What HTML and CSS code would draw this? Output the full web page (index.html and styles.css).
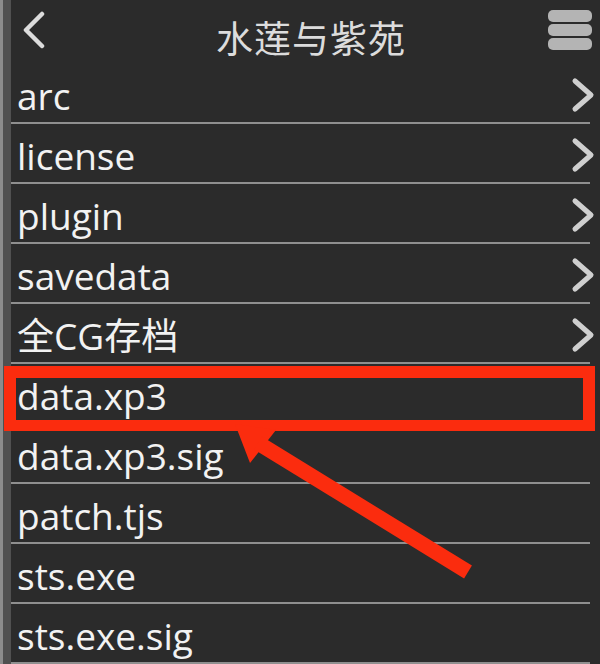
FILE: index.html
```html
<!DOCTYPE html>
<html>
<head>
    <title>水莲与紫苑</title>
    <link rel="stylesheet" href="styles.css">
</head>
<body>
    <div class="screen">
        <div class="edge"></div>

        <div class="panel">
            <header class="topbar">
                <svg class="back" width="24" height="38" viewBox="0 0 24 38">
                    <path d="M20 3 L4 19 L20 35" fill="none" stroke="#dcdcdc" stroke-width="4.5" stroke-linecap="round" stroke-linejoin="round"/>
                </svg>
                <h1 class="title">水莲与紫苑</h1>
                <div class="menu">
                    <span></span>
                    <span></span>
                    <span></span>
                </div>
            </header>

            <ul class="files">
                <li class="dir"><span>arc</span><svg class="chev" width="24" height="36" viewBox="0 0 24 36"><path d="M4 4 L20 18 L4 32" fill="none" stroke="#cfcfcf" stroke-width="5" stroke-linecap="round" stroke-linejoin="round"/></svg></li>
                <li class="dir"><span>license</span><svg class="chev" width="24" height="36" viewBox="0 0 24 36"><path d="M4 4 L20 18 L4 32" fill="none" stroke="#cfcfcf" stroke-width="5" stroke-linecap="round" stroke-linejoin="round"/></svg></li>
                <li class="dir"><span>plugin</span><svg class="chev" width="24" height="36" viewBox="0 0 24 36"><path d="M4 4 L20 18 L4 32" fill="none" stroke="#cfcfcf" stroke-width="5" stroke-linecap="round" stroke-linejoin="round"/></svg></li>
                <li class="dir"><span>savedata</span><svg class="chev" width="24" height="36" viewBox="0 0 24 36"><path d="M4 4 L20 18 L4 32" fill="none" stroke="#cfcfcf" stroke-width="5" stroke-linecap="round" stroke-linejoin="round"/></svg></li>
                <li class="dir"><span>全CG存档</span><svg class="chev" width="24" height="36" viewBox="0 0 24 36"><path d="M4 4 L20 18 L4 32" fill="none" stroke="#cfcfcf" stroke-width="5" stroke-linecap="round" stroke-linejoin="round"/></svg></li>
                <li><span>data.xp3</span></li>
                <li><span>data.xp3.sig</span></li>
                <li><span>patch.tjs</span></li>
                <li><span>sts.exe</span></li>
                <li><span>sts.exe.sig</span></li>
            </ul>
        </div>

        <!-- red highlight drawn over the screenshot -->
        <div class="mark"></div>
        <svg class="arrow" width="600" height="664" viewBox="0 0 600 664">
            <polygon points="235,424 276,430 250,463" fill="#fb2c0e"/>
            <line x1="258" y1="443" x2="468" y2="572" stroke="#fb2c0e" stroke-width="15"/>
        </svg>
    </div>
</body>
</html>
```

FILE: styles.css
```css
body {
    margin: 0;
    padding: 0;
    background-color: #2b2b2b;
}

.screen {
    position: relative;
    width: 600px;
    height: 664px;
    overflow: hidden;
    display: flex;
    background-color: #2b2b2b;
}

.edge {
    width: 11px;
    flex-shrink: 0;
    background: linear-gradient(to right, #8c8c8c 3px, #505050 3px);
}

.panel {
    flex: 1;
    display: flex;
    flex-direction: column;
}

.topbar {
    height: 65px;
    display: grid;
    grid-template-columns: 1fr auto 1fr;
    align-items: center;
    padding: 0 8px 0 11px;
}

.topbar .back {
    margin-bottom: 5px;
}

.title {
    margin: 11px 0 0 8px;
    font-family: "Noto Sans CJK SC", sans-serif;
    font-weight: normal;
    font-size: 37px;
    line-height: 1;
    letter-spacing: 1px;
    color: #dcdcdc;
}

.menu {
    justify-self: end;
    width: 44px;
    display: flex;
    flex-direction: column;
    gap: 2px;
    margin-bottom: 5px;
}

.menu span {
    height: 12px;
    border-radius: 5px;
    background-color: #b4b4b4;
}

.files {
    list-style-type: none;
    margin: 0;
    padding: 0;
}

.files li {
    height: 60px;
    box-sizing: border-box;
    padding: 6px 5px 2px 6px;
    display: flex;
    justify-content: space-between;
    align-items: center;
    font-family: "Open Sans", "Noto Sans CJK SC", sans-serif;
    font-size: 37px;
    line-height: 52px;
    color: #f2f2f2;
    background: linear-gradient(#8f8f8f, #8f8f8f) no-repeat left bottom / calc(100% - 10px) 2px;
}

.files li .chev {
    margin-bottom: 3px;
}

.mark {
    position: absolute;
    left: 4px;
    top: 366px;
    width: 591px;
    height: 65px;
    box-sizing: border-box;
    border: 12px solid #fb2c0e;
    border-bottom-width: 11px;
}

.arrow {
    position: absolute;
    left: 0;
    top: 0;
}
```
